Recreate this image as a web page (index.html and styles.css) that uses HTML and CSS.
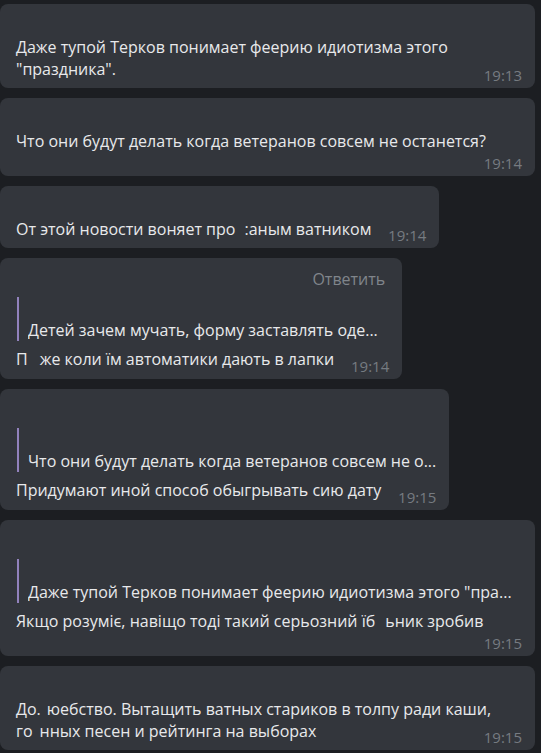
FILE: index.html
```html
<!DOCTYPE html>
<html lang="ru">
<head>
<meta charset="utf-8">
<title>Chat</title>
<link rel="stylesheet" href="styles.css">
</head>
<body>
<div class="chat">

  <div class="bubble">
    <div class="name"></div>
    <div class="text">Даже тупой Терков понимает феерию идиотизма этого "праздника".<span class="spacer"></span></div>
    <div class="time inline">19:13</div>
  </div>

  <div class="bubble wide">
    <div class="name"></div>
    <div class="text">Что они будут делать когда ветеранов совсем не останется?</div>
    <div class="time own">19:14</div>
  </div>

  <div class="bubble">
    <div class="name"></div>
    <div class="text">От этой новости воняет <span class="word">про<span class="gap g9"></span>:аным</span> ватником<span class="spacer"></span></div>
    <div class="time inline">19:14</div>
  </div>

  <div class="bubble">
    <div class="name"><span class="reply-btn">Ответить</span></div>
    <div class="quote"><div class="qname"></div><div class="qtext">Детей зачем мучать, форму заставлять оде...</div></div>
    <div class="text">П<span class="gap g12"></span>же коли їм автоматики дають в лапки<span class="spacer"></span></div>
    <div class="time inline-q">19:14</div>
  </div>

  <div class="bubble">
    <div class="name"></div>
    <div class="quote"><div class="qname"></div><div class="qtext">Что они будут делать когда ветеранов совсем не о...</div></div>
    <div class="text">Придумают иной способ обыгрывать сию дату<span class="spacer"></span></div>
    <div class="time inline-q">19:15</div>
  </div>

  <div class="bubble wide">
    <div class="name"></div>
    <div class="quote"><div class="qname"></div><div class="qtext">Даже тупой Терков понимает феерию идиотизма этого "пра...</div></div>
    <div class="text">Якщо розуміє, навіщо тоді такий серьозний <span class="word">їб<span class="gap g10"></span>ьник</span> зробив</div>
    <div class="time own-q">19:15</div>
  </div>

  <div class="bubble">
    <div class="name"></div>
    <div class="text"><span class="word">До.<span class="gap g6"></span>юебство.</span> Вытащить ватных стариков в толпу ради каши, <span class="word">го<span class="gap g7"></span>нных</span> песен и рейтинга на выборах<span class="spacer"></span></div>
    <div class="time inline">19:15</div>
  </div>

</div>
</body>
</html>
```

FILE: styles.css
```css
html, body {
  margin: 0;
  padding: 0;
  background: #1c1e22;
  height: 100%;
  overflow: hidden;
}

.chat {
  display: flex;
  flex-direction: column;
  align-items: flex-start;
  gap: 10px;
  padding-top: 4px;
  font-family: "Open Sans", "Noto Sans", sans-serif;
}

.bubble {
  display: flex;
  flex-direction: column;
  box-sizing: border-box;
  max-width: 535px;
  padding: 10px 13px 5px 16px;
  background: #33363c;
  border-radius: 8px;
  color: #e8e9eb;
  font-size: 16px;
  line-height: 22px;
}

.wide {
  width: 535px;
}

.name {
  height: 22px;
  display: flex;
  justify-content: flex-end;
}

.reply-btn {
  color: #80858b;
  margin-right: 4px;
}

.word {
  white-space: nowrap;
}

.spacer {
  display: inline-block;
  width: 55px;
  height: 1px;
}

.gap {
  display: inline-block;
  height: 1px;
}
.g6 { width: 6px; }
.g7 { width: 7px; }
.g9 { width: 9px; }
.g10 { width: 10px; }
.g12 { width: 12px; }

.quote {
  margin-top: 7px;
  margin-bottom: 7px;
  border-left: 2px solid #9282bd;
  margin-left: 1px;
  padding-left: 9px;
  min-width: 0;
}

.qname {
  height: 22px;
}

.qtext {
  white-space: nowrap;
  overflow: hidden;
  text-overflow: ellipsis;
}

.time {
  align-self: flex-end;
  font-size: 15px;
  line-height: 16px;
  color: #767b81;
}

.time.inline { margin-top: -13px; }
.time.own { margin-top: 3px; }
.time.inline-q { margin-top: -12px; }
.time.own-q { margin-top: 3px; }
```
